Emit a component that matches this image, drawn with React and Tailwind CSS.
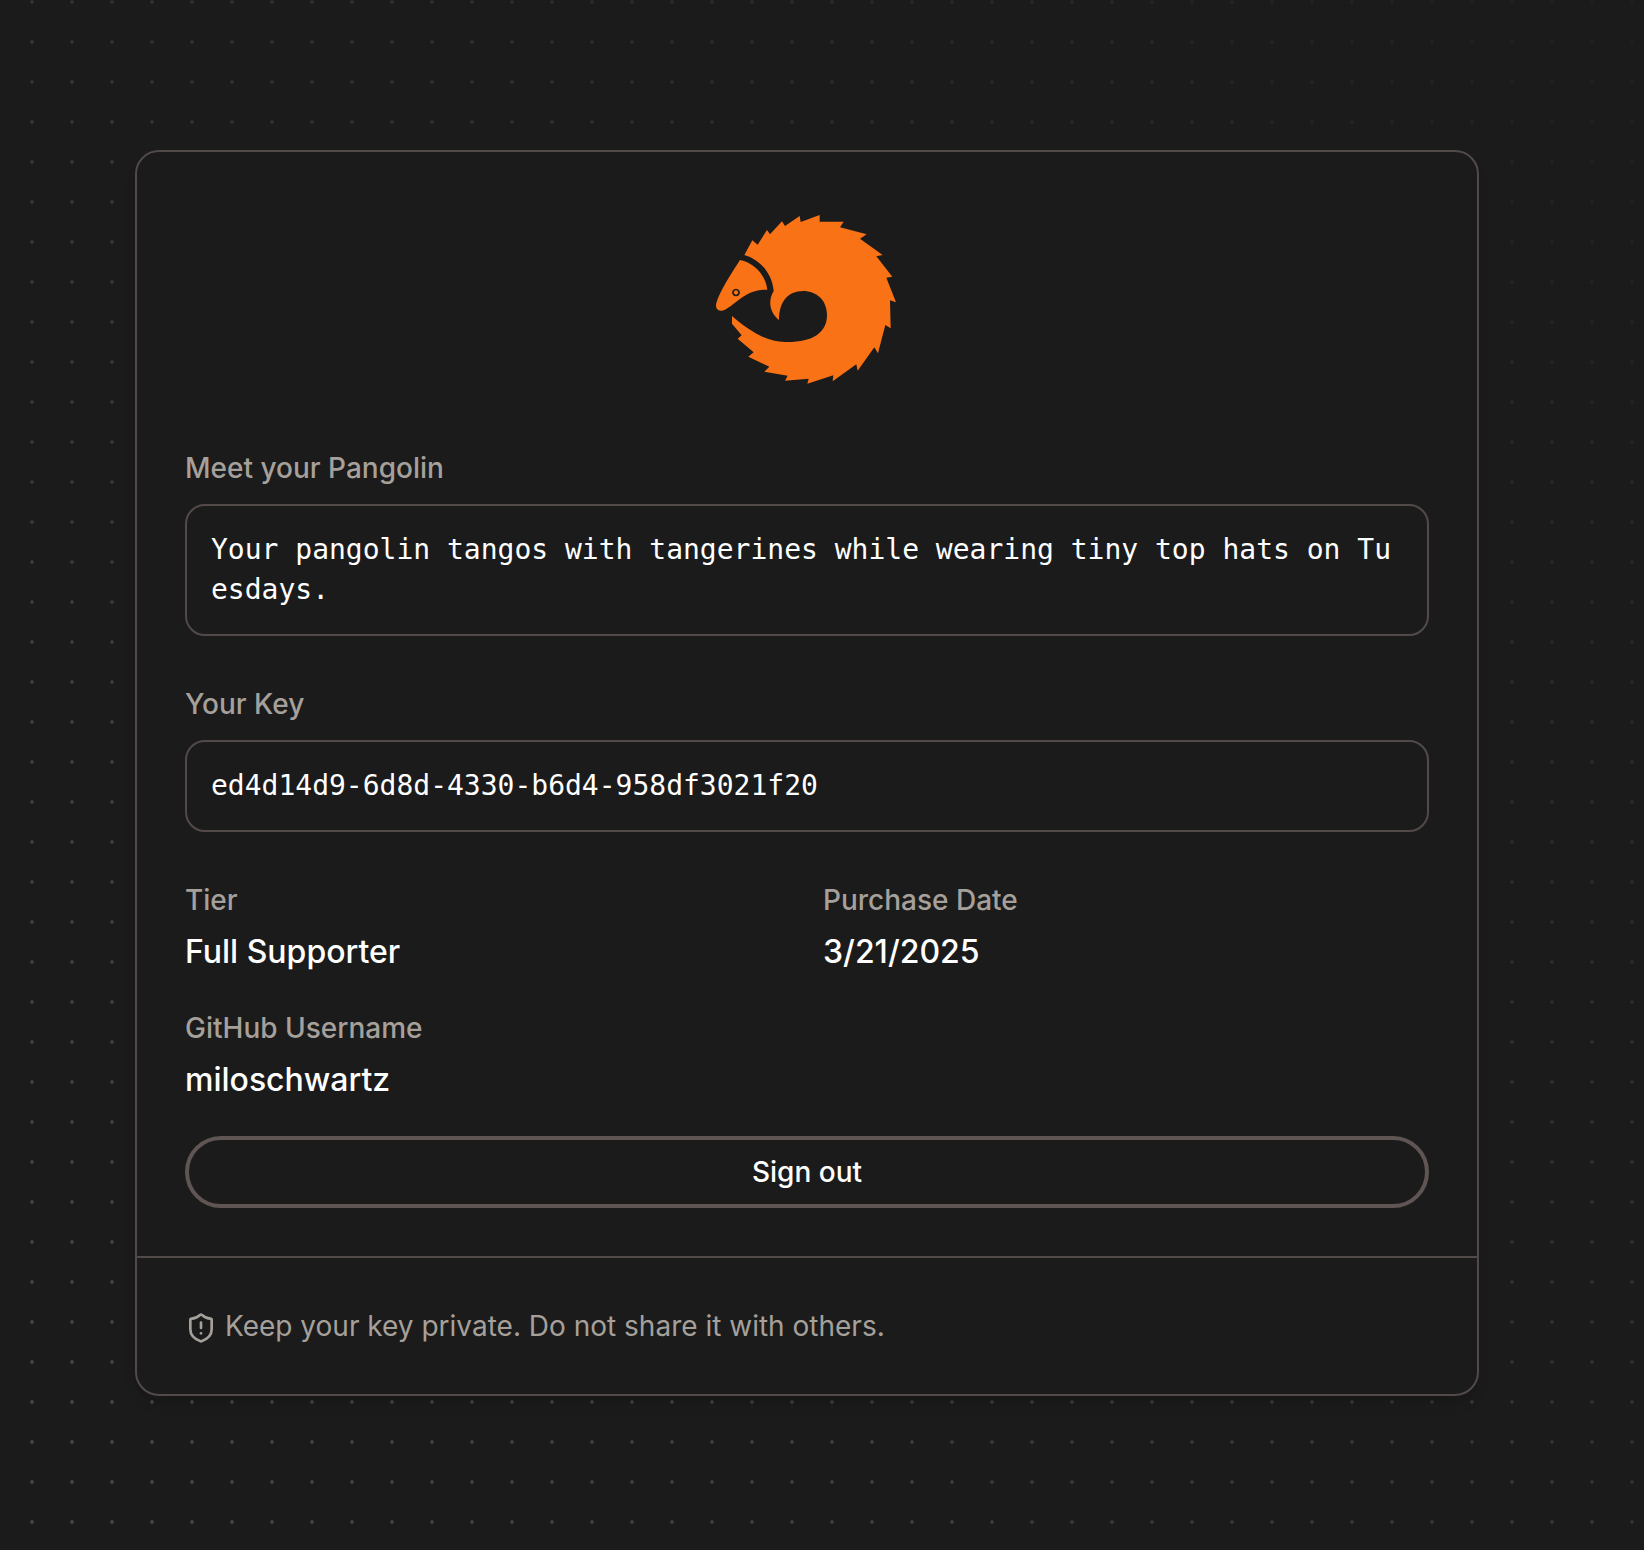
import { ShieldAlert } from "lucide-react";

function PangolinLogo() {
  return (
    <svg viewBox="6 0 630 600" className="h-[200px] w-[210px]" role="img" aria-label="Pangolin">
      <g fill="#f97316">
        <path d="M133 165 L157 121 L173 134 L201 90 L210 103 L246 64 L255 78 L299 48 L302 66 L359 45 L359 65 L431 65 L420 82 L500 103 L480 116 L548 165 L529 169 L577 230 L559 233 L588 307 L570 301 L572 385 L556 375 L534 460 L523 442 L473 512 L469 493 L398 544 L400 526 L322 551 L326 536 L255 542 L263 527 L193 515 L208 500 L145 470 L161 457 L113 416 L125 406 L96 371 L96 348 C150 394 200 426 255 426 C335 428 381 400 381 345 C381 302 351 273 309 273 C263 273 237 306 237 360 C209 338 203 303 221 273 C217 222 181 179 133 165 Z" />
        <path
          fillRule="evenodd"
          d="M120 180 C165 190 197 226 202 269 C141 267 118 303 80 326 C62 338 48 332 48 316 C52 286 90 226 120 180 Z M108 266 a11.500 11.500 0 1 0 0.010 0 Z"
        />
        <circle cx="108" cy="277.500" r="6.500" />
      </g>
    </svg>
  );
}

function CodeField({ label, children }) {
  return (
    <section className="flex flex-col gap-4">
      <h2 className="text-[28px] leading-10 font-medium text-stone-400">{label}</h2>
      <code className="block rounded-[20px] border-2 border-[#524a48] px-6 py-6 font-['DejaVu_Sans_Mono',monospace] text-[28px] leading-10 break-all text-white">
        {children}
      </code>
    </section>
  );
}

function Detail({ label, children }) {
  return (
    <div className="flex flex-col gap-2">
      <dt className="text-[28px] leading-10 font-medium text-stone-400">{label}</dt>
      <dd className="text-[32px] leading-12 font-medium text-white">{children}</dd>
    </div>
  );
}

export default function App() {
  return (
    <div className="relative isolate min-h-screen bg-[#1b1b1b] font-['Inter',sans-serif]">
      <div
        aria-hidden="true"
        className="absolute inset-0 -z-10 bg-[radial-gradient(circle,#444444_2px,transparent_2px)] bg-[size:40px_40px] bg-[position:12px_-18px] [mask-image:linear-gradient(to_top_right,black,rgba(0,0,0,0.1))]"
      />
      <main className="flex items-start justify-center pt-[150px] pr-[30px] pb-[150px]">
        <div className="w-full max-w-[1344px] rounded-3xl border-2 border-[#524a48] bg-[#1b1b1b] shadow-lg">
          <div className="flex flex-col p-12">
            <div className="mb-12 flex justify-center">
              <PangolinLogo />
            </div>
            <div className="flex flex-col gap-12">
              <CodeField label="Meet your Pangolin">
                Your pangolin tangos with tangerines while wearing tiny top hats on Tuesdays.
              </CodeField>
              <CodeField label="Your Key">ed4d14d9-6d8d-4330-b6d4-958df3021f20</CodeField>
              <dl className="grid grid-cols-2 gap-8">
                <Detail label="Tier">Full Supporter</Detail>
                <Detail label="Purchase Date">3/21/2025</Detail>
                <Detail label="GitHub Username">miloschwartz</Detail>
              </dl>
            </div>
            <button
              type="button"
              className="mt-8 h-[72px] w-full rounded-full border-4 border-[#5f5654] text-[28px] leading-10 font-medium text-white"
            >
              Sign out
            </button>
          </div>
          <footer className="flex items-center gap-2 border-t-2 border-[#524a48] p-12 text-stone-400">
            <ShieldAlert className="mt-1 size-8 shrink-0" aria-hidden="true" />
            <p className="text-[28px] leading-10">Keep your key private. Do not share it with others.</p>
          </footer>
        </div>
      </main>
    </div>
  );
}
